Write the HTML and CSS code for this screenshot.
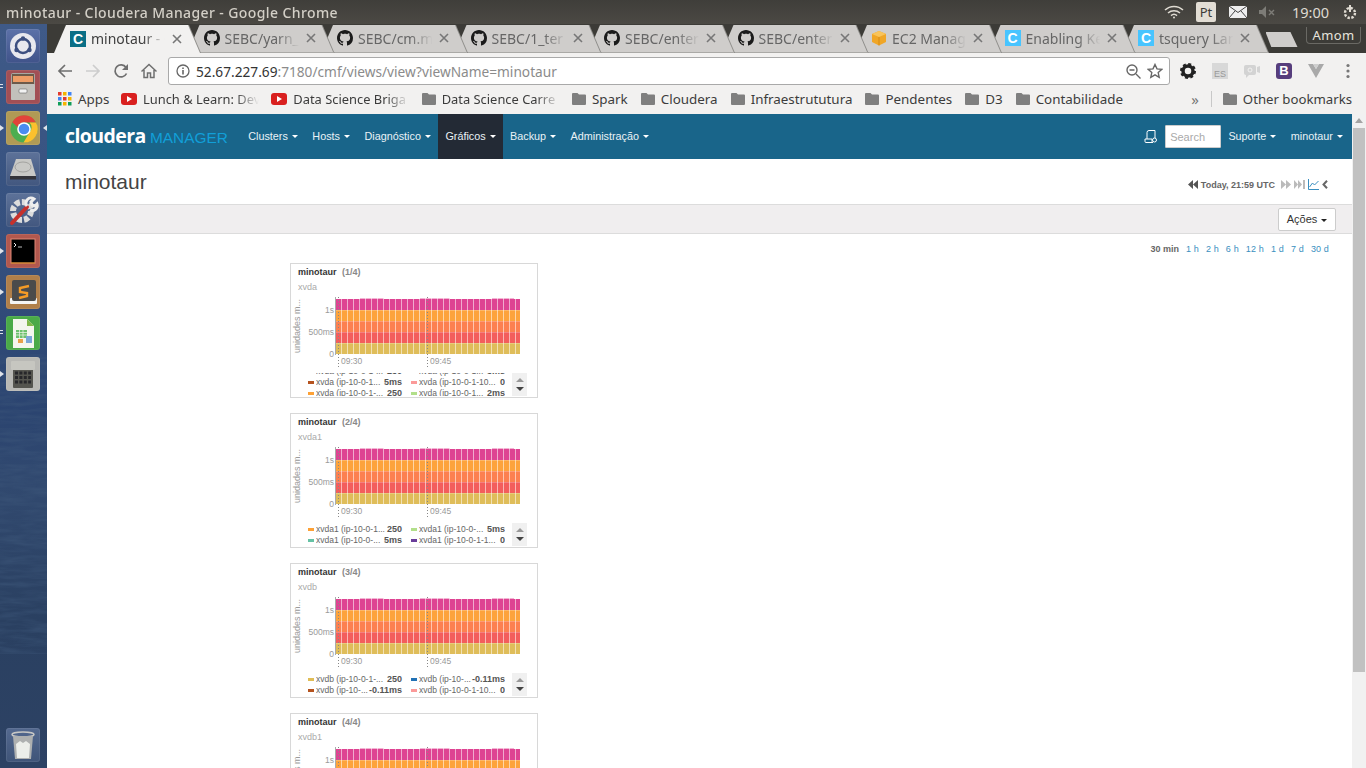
FILE: index.html
```html
<!DOCTYPE html>
<html lang="en">
<head>
  <meta charset="UTF-8">
  <title>minotaur - Cloudera Manager</title>
  <link rel="stylesheet" href="styles.css">
</head>
<body>
  <!-- shared shapes -->
  <svg class="defs">
    <defs>
      <pattern id="cols" width="6" height="60" patternUnits="userSpaceOnUse">
        <rect x="5" width="1" height="60" fill="#fff" opacity=".55"/>
      </pattern>
      <filter id="waves" x="0" y="0" width="100%" height="100%">
        <feTurbulence type="fractalNoise" baseFrequency=".035 .22" numOctaves="3" seed="7"/>
        <feColorMatrix values="0 0 0 0 .05  0 0 0 0 .1  0 0 0 0 .2  1.600 0 0 0 -.55"/>
      </filter>
      <symbol id="bars" viewBox="0 0 184 56">
        <rect y="1" width="184" height="11" fill="#de4392"/>
        <rect y="12" width="184" height="11" fill="#fda33c"/>
        <rect y="23" width="184" height="11" fill="#fc8050"/>
        <rect y="34" width="184" height="11" fill="#f35d5c"/>
        <rect y="45" width="184" height="11" fill="#dfbd5a"/>
        <rect x="24" width="24" height="1" fill="#de4392" opacity=".4"/>
        <rect x="84" width="30" height="1" fill="#de4392" opacity=".4"/>
        <rect x="156" width="22" height="1" fill="#de4392" opacity=".4"/>
        <path stroke="#fff" stroke-opacity=".22" d="M0 12.500h184M0 23.500h184M0 34.500h184M0 45.500h184"/>
        <rect width="184" height="56" fill="url(#cols)"/>
      </symbol>
      <symbol id="gh" viewBox="0 0 16 16">
        <path fill="#1b1b1b" d="M8 0C3.58 0 0 3.58 0 8c0 3.54 2.29 6.53 5.47 7.59.4.07.55-.17.55-.38 0-.19-.01-.82-.01-1.49-2.01.37-2.53-.49-2.69-.94-.09-.23-.48-.94-.82-1.13-.28-.15-.68-.52-.01-.53.63-.01 1.08.58 1.23.82.72 1.21 1.87.87 2.33.66.07-.52.28-.87.51-1.07-1.78-.2-3.64-.89-3.64-3.95 0-.87.31-1.59.82-2.15-.08-.2-.36-1.02.08-2.12 0 0 .67-.21 2.2.82.64-.18 1.32-.27 2-.27.68 0 1.36.09 2 .27 1.53-1.04 2.2-.82 2.2-.82.44 1.1.16 1.92.08 2.12.51.56.82 1.27.82 2.15 0 3.07-1.87 3.75-3.65 3.95.29.25.54.73.54 1.48 0 1.07-.01 1.93-.01 2.2 0 .21.15.46.55.38A8.013 8.013 0 0016 8c0-4.42-3.58-8-8-8z"/>
      </symbol>
      <symbol id="folder" viewBox="0 0 14 12">
        <path fill="#7f7f7f" d="M1 0h4.500l1.500 1.600h6a1 1 0 0 1 1 1V11a1 1 0 0 1-1 1H1a1 1 0 0 1-1-1V1a1 1 0 0 1 1-1z"/>
      </symbol>
      <symbol id="yt" viewBox="0 0 16 12">
        <rect width="16" height="12" rx="3" fill="#d9201f"/>
        <path fill="#fff" d="M6 3l5 3-5 3z"/>
      </symbol>
      <symbol id="x" viewBox="0 0 10 10">
        <path stroke="#777" stroke-width="1.600" d="M1 1l8 8M9 1l-8 8"/>
      </symbol>
    </defs>
  </svg>

  <header class="panel">
    <div class="panel-title">minotaur - Cloudera Manager - Google Chrome</div>
    <div class="indicators">
      <svg class="ind-wifi" width="20" height="14" viewBox="0 0 20 14" fill="none" stroke="#dfdbd2" stroke-width="1.500">
        <path d="M1 5a13 13 0 0 1 18 0M4 8a9 9 0 0 1 12 0M7 10.600a4.500 4.500 0 0 1 6 0"/>
        <circle cx="10" cy="12.500" r="1" fill="#dfdbd2" stroke="none"/>
      </svg>
      <span class="ind-lang">Pt</span>
      <svg class="ind-mail" width="18" height="12" viewBox="0 0 18 12">
        <rect width="18" height="12" rx="1" fill="#eee"/>
        <path fill="none" stroke="#444" d="M0 0l9 6.500L18 0M0 12l6-7M18 12l-6-7"/>
      </svg>
      <svg class="ind-mute" width="18" height="12" viewBox="0 0 18 12">
        <path fill="#7d7c77" d="M0 4h3l4-4v12l-4-4H0z"/>
        <path stroke="#7d7c77" stroke-width="1.400" d="M10 4l5 5M15 4l-5 5"/>
      </svg>
      <span class="ind-clock">19:00</span>
      <svg class="ind-power" width="16" height="16" viewBox="0 0 16 16">
        <circle cx="8" cy="9" r="5" fill="none" stroke="#dfdbd2" stroke-width="2.400" stroke-dasharray="2.400 1.500"/>
        <path stroke="#dfdbd2" stroke-width="2" d="M8 1v7"/>
      </svg>
    </div>
  </header>

  <div class="desktop">
    <nav class="dock">
      <svg class="dock-waves" width="47" height="744"><rect y="330" width="47" height="300" filter="url(#waves)"/></svg>
      <div class="dock-group">
        <div class="tile tile-ubuntu">
          <svg width="34" height="34" viewBox="0 0 34 34">
            <circle cx="17" cy="17" r="13" fill="#e8e8ee"/>
            <circle cx="17" cy="17" r="7" fill="none" stroke="#3d4f80" stroke-width="2.500"/>
            <circle cx="17" cy="9.500" r="2.200" fill="#3d4f80"/>
            <circle cx="10.500" cy="21" r="2.200" fill="#3d4f80"/>
            <circle cx="23.500" cy="21" r="2.200" fill="#3d4f80"/>
          </svg>
        </div>
        <div class="tile tile-files">
          <svg width="34" height="34" viewBox="0 0 34 34">
            <rect x="5" y="3" width="24" height="27" rx="2" fill="#a9a7a2"/>
            <rect x="6" y="4" width="22" height="10" fill="#6d5a4a"/>
            <rect x="7" y="6" width="20" height="6" fill="#ee9c66"/>
            <rect x="5" y="14" width="24" height="16" rx="1" fill="#c2c0bb"/>
            <rect x="13" y="19" width="8" height="4" rx="1" fill="#f2f2f2" stroke="#666" stroke-width=".6"/>
          </svg>
          <i class="pip pip-dots"></i>
        </div>
        <div class="tile tile-chrome">
          <svg width="34" height="34" viewBox="0 0 34 34">
            <circle cx="18" cy="18" r="13.500" fill="#4cae50"/>
            <path fill="#e2443a" d="M6.300 11.200A13.500 13.500 0 0 1 30 11.500H18a7 7 0 0 0-6.500 4.500z"/>
            <path fill="#fbc02d" d="M30 11.500a13.500 13.500 0 0 1-12.500 20l6-10a7 7 0 0 0 0-10z"/>
            <circle cx="18" cy="18" r="6.800" fill="#fff"/>
            <circle cx="18" cy="18" r="5.300" fill="#4a8cf0"/>
          </svg>
          <i class="pip pip-left"></i>
          <i class="pip pip-right"></i>
        </div>
        <div class="tile tile-glass">
          <svg width="34" height="34" viewBox="0 0 34 34">
            <path fill="#c9c9c6" d="M10 7h15l5 17H4z"/>
            <path fill="#34343a" d="M4 24h26v3.500H4z"/>
            <ellipse cx="17" cy="15" rx="8" ry="5" fill="none" stroke="#a3a3a0"/>
          </svg>
        </div>
        <div class="tile tile-glass">
          <svg width="34" height="34" viewBox="0 0 34 34">
            <circle cx="16" cy="18" r="9" fill="none" stroke="#dcdcdc" stroke-width="6" stroke-dasharray="5 2"/>
            <path stroke="#c7312c" stroke-width="4" stroke-linecap="round" d="M6 30L21 14"/>
            <path fill="none" stroke="#eee" stroke-width="3" d="M21 13a5 5 0 0 1 7-7l-3 3 1 3 3 1 2-2a5 5 0 0 1-7 6"/>
          </svg>
        </div>
        <div class="tile tile-term">
          <svg width="34" height="34" viewBox="0 0 34 34">
            <rect x="5" y="5" width="24" height="24" fill="#000" stroke="#d87" stroke-width="1"/>
            <path stroke="#d38a1a" d="M5 29h24"/>
            <path fill="none" stroke="#eee" d="M8 9l2 2-2 2"/>
            <path stroke="#bbb" d="M12 13h4"/>
          </svg>
          <i class="pip pip-left"></i>
        </div>
        <div class="tile tile-sublime">
          <svg width="34" height="34" viewBox="0 0 34 34">
            <rect x="4" y="23" width="27" height="6" rx="1" fill="#f4f4f4"/>
            <rect x="6" y="5" width="24" height="21" rx="2" fill="#4b4b4b"/>
            <path fill="none" stroke="#f59b26" stroke-width="2.400" d="M23 11l-9 2v4l7 1v3l-8 2"/>
          </svg>
          <i class="pip pip-left"></i>
        </div>
        <div class="tile tile-calc">
          <svg width="34" height="34" viewBox="0 0 34 34">
            <path fill="#f4f6ee" d="M7 3h14l7 7v22H7z"/>
            <path fill="#80b84a" d="M21 3l7 7h-7z"/>
            <rect x="10" y="14" width="11" height="8" fill="#6cc16c"/>
            <path stroke="#f4f6ee" stroke-width=".7" d="M10 16.500h11M10 19h11M13.500 14v8M17 14v8"/>
            <rect x="20" y="20" width="6" height="7" fill="#7aa6d8"/>
            <rect x="12" y="23" width="5" height="4" fill="#e8a14a"/>
          </svg>
          <i class="pip pip-dots"></i>
        </div>
        <div class="tile tile-calculator">
          <svg width="34" height="34" viewBox="0 0 34 34">
            <rect x="7" y="4" width="20" height="27" rx="1" fill="#55554f"/>
            <rect x="5" y="4" width="24" height="9" rx="1" fill="#c6c6c0"/>
            <path stroke="#27272a" stroke-width="3" stroke-dasharray="3 1.400" d="M9 16h16M9 20.500h16M9 25h16"/>
          </svg>
          <i class="pip pip-left"></i>
        </div>
      </div>
      <div class="tile tile-trash">
        <svg width="34" height="34" viewBox="0 0 34 34">
          <ellipse cx="17" cy="6.500" rx="11" ry="2.500" fill="none" stroke="#c7c7c5" stroke-width="1.500"/>
          <path fill="#aeb0b0" d="M7 8h20l-2 23H9z"/>
          <path fill="#eceeea" d="M10 16l4-3 3 2 3-2 4 3-1 14H11z"/>
        </svg>
      </div>
    </nav>

    <div class="browser">
      <div class="tabstrip">
        <div class="tab tab-active"><div class="tab-shape">
          <span class="fav fav-cloudera">C</span>
          <span class="tab-title">minotaur - C</span>
          <svg class="tab-x" width="10" height="10"><use href="#x"/></svg>
        </div></div>
        <div class="tab"><div class="tab-shape">
          <svg class="fav" width="16" height="16"><use href="#gh"/></svg>
          <span class="tab-title">SEBC/yarn_</span>
          <svg class="tab-x" width="10" height="10"><use href="#x"/></svg>
        </div></div>
        <div class="tab"><div class="tab-shape">
          <svg class="fav" width="16" height="16"><use href="#gh"/></svg>
          <span class="tab-title">SEBC/cm.m</span>
          <svg class="tab-x" width="10" height="10"><use href="#x"/></svg>
        </div></div>
        <div class="tab"><div class="tab-shape">
          <svg class="fav" width="16" height="16"><use href="#gh"/></svg>
          <span class="tab-title">SEBC/1_ter</span>
          <svg class="tab-x" width="10" height="10"><use href="#x"/></svg>
        </div></div>
        <div class="tab"><div class="tab-shape">
          <svg class="fav" width="16" height="16"><use href="#gh"/></svg>
          <span class="tab-title">SEBC/enter</span>
          <svg class="tab-x" width="10" height="10"><use href="#x"/></svg>
        </div></div>
        <div class="tab"><div class="tab-shape">
          <svg class="fav" width="16" height="16"><use href="#gh"/></svg>
          <span class="tab-title">SEBC/enter</span>
          <svg class="tab-x" width="10" height="10"><use href="#x"/></svg>
        </div></div>
        <div class="tab"><div class="tab-shape">
          <svg class="fav" width="16" height="16" viewBox="0 0 16 16">
            <path fill="#f0a626" d="M8 1l7 3v8l-7 3.500L1 12V4z"/>
            <path fill="#f9c45a" d="M8 1l7 3-7 3-7-3z"/>
            <path stroke="#c97f10" stroke-width=".7" d="M8 7v8.500"/>
          </svg>
          <span class="tab-title">EC2 Manag</span>
          <svg class="tab-x" width="10" height="10"><use href="#x"/></svg>
        </div></div>
        <div class="tab"><div class="tab-shape">
          <span class="fav fav-confluence">C</span>
          <span class="tab-title">Enabling Ke</span>
          <svg class="tab-x" width="10" height="10"><use href="#x"/></svg>
        </div></div>
        <div class="tab"><div class="tab-shape">
          <span class="fav fav-confluence">C</span>
          <span class="tab-title">tsquery Lan</span>
          <svg class="tab-x" width="10" height="10"><use href="#x"/></svg>
        </div></div>
        <div class="newtab"></div>
        <div class="profile">Amom</div>
      </div>

      <div class="toolbar">
        <svg class="tb-icon" width="16" height="16" viewBox="0 0 16 16" fill="none" stroke="#6f6f6f" stroke-width="1.700">
          <path d="M15 8H2M8 2L2 8l6 6"/>
        </svg>
        <svg class="tb-icon" width="16" height="16" viewBox="0 0 16 16" fill="none" stroke="#cdcdcd" stroke-width="1.700">
          <path d="M1 8h13M8 2l6 6-6 6"/>
        </svg>
        <svg class="tb-icon" width="16" height="16" viewBox="0 0 16 16" fill="none" stroke="#6f6f6f" stroke-width="1.700">
          <path d="M13.500 10.500A6 6 0 1 1 13 4.500"/>
          <path fill="#6f6f6f" stroke="none" d="M15 1v6H9z"/>
        </svg>
        <svg class="tb-icon" width="16" height="16" viewBox="0 0 16 16" fill="none" stroke="#6f6f6f" stroke-width="1.500">
          <path d="M.5 8.500L8 1.500l7.500 7M3 7v7.500h3.500V10h3v4.500H13V7"/>
        </svg>
        <div class="omnibox">
          <svg width="14" height="14" viewBox="0 0 14 14" fill="none" stroke="#666" stroke-width="1.300">
            <circle cx="7" cy="7" r="6"/><path stroke-width="1.600" d="M7 6v4.500M7 3.400v1.500"/>
          </svg>
          <span class="url"><b>52.67.227.69</b>:7180/cmf/views/view?viewName=minotaur</span>
          <svg width="15" height="15" viewBox="0 0 15 15" fill="none" stroke="#666" stroke-width="1.400">
            <circle cx="6" cy="6" r="5"/><path d="M3.500 6h5M10 10l4.500 4.500"/>
          </svg>
          <svg width="16" height="16" viewBox="0 0 16 16" fill="none" stroke="#666" stroke-width="1.400">
            <path d="M8 1.500l2 4.400 4.700.5-3.500 3.200 1 4.700L8 11.900l-4.200 2.400 1-4.700L1.300 6.400 6 5.900z"/>
          </svg>
        </div>
        <div class="extensions">
          <svg width="16" height="16" viewBox="0 0 16 16">
            <circle cx="8" cy="8" r="5" fill="none" stroke="#222" stroke-width="3.500"/>
            <circle cx="8" cy="8" r="7" fill="none" stroke="#222" stroke-width="2" stroke-dasharray="3 2.500"/>
          </svg>
          <span class="ext-es">ES</span>
          <svg width="16" height="14" viewBox="0 0 16 14">
            <rect width="12" height="10" y="1" rx="2" fill="#d3d3d3"/>
            <path fill="#d3d3d3" d="M2 10v4l4-4zM13 3l3-1v7l-3-1z"/>
            <circle cx="6" cy="6" r="2" fill="none" stroke="#f2f1f0"/>
          </svg>
          <span class="ext-b">B</span>
          <svg width="16" height="14" viewBox="0 0 16 14">
            <path fill="#a9a9a9" d="M0 0h5l3 5 3-5h5L8 14z"/>
            <path fill="#cfcfcf" d="M5 0h6L8 5z"/>
          </svg>
          <svg class="ext-menu" width="4" height="16" viewBox="0 0 4 16">
            <circle cx="2" cy="2.500" r="1.600" fill="#777"/><circle cx="2" cy="8" r="1.600" fill="#777"/><circle cx="2" cy="13.500" r="1.600" fill="#777"/>
          </svg>
        </div>
      </div>

      <div class="bookmarks">
        <div class="bm bm-apps">
          <svg width="14" height="14" viewBox="0 0 14 14">
            <rect width="3.500" height="3.500" fill="#e33b2e"/><rect x="5" width="3.500" height="3.500" fill="#f4b400"/><rect x="10" width="3.500" height="3.500" fill="#4285f4"/>
            <rect y="5" width="3.500" height="3.500" fill="#4285f4"/><rect x="5" y="5" width="3.500" height="3.500" fill="#e33b2e"/><rect x="10" y="5" width="3.500" height="3.500" fill="#f4b400"/>
            <rect y="10" width="3.500" height="3.500" fill="#0f9d58"/><rect x="5" y="10" width="3.500" height="3.500" fill="#f4b400"/><rect x="10" y="10" width="3.500" height="3.500" fill="#0f9d58"/>
          </svg>
          <span>Apps</span>
        </div>
        <div class="bm bm-long"><svg width="16" height="12"><use href="#yt"/></svg><span class="bm-fade">Lunch &amp; Learn: Dev</span></div>
        <div class="bm bm-long"><svg width="16" height="12"><use href="#yt"/></svg><span class="bm-fade">Data Science Briga</span></div>
        <div class="bm bm-long"><svg width="14" height="12"><use href="#folder"/></svg><span class="bm-fade">Data Science Carre</span></div>
        <div class="bm"><svg width="14" height="12"><use href="#folder"/></svg><span>Spark</span></div>
        <div class="bm"><svg width="14" height="12"><use href="#folder"/></svg><span>Cloudera</span></div>
        <div class="bm"><svg width="14" height="12"><use href="#folder"/></svg><span>Infraestrututura</span></div>
        <div class="bm"><svg width="14" height="12"><use href="#folder"/></svg><span>Pendentes</span></div>
        <div class="bm"><svg width="14" height="12"><use href="#folder"/></svg><span>D3</span></div>
        <div class="bm"><svg width="14" height="12"><use href="#folder"/></svg><span>Contabilidade</span></div>
        <div class="bm-right">
          <span class="bm-more">»</span>
          <i class="bm-sep"></i>
          <div class="bm"><svg width="14" height="12"><use href="#folder"/></svg><span>Other bookmarks</span></div>
        </div>
      </div>

      <div class="viewport">
        <main class="page">
          <div class="cm-nav">
            <div class="logo"><span class="logo-a">cloudera</span> <span class="logo-b">MANAGER</span></div>
            <a class="nav-item">Clusters<i class="caret"></i></a>
            <a class="nav-item">Hosts<i class="caret"></i></a>
            <a class="nav-item">Diagnóstico<i class="caret"></i></a>
            <a class="nav-item nav-active">Gráficos<i class="caret"></i></a>
            <a class="nav-item">Backup<i class="caret"></i></a>
            <a class="nav-item">Administração<i class="caret"></i></a>
            <div class="nav-right">
              <svg width="13" height="13" viewBox="0 0 13 13" fill="none" stroke="#fff">
                <path d="M3 9V2.500a2 2 0 0 1 2-2h6v8M1 9h7v2.500a1 1 0 0 0 1 1H2a1 1 0 0 1-1-1z"/>
                <circle cx="10.500" cy="10" r="2" fill="#19658a"/>
              </svg>
              <input class="nav-search" placeholder="Search">
              <a class="nav-item">Suporte<i class="caret"></i></a>
              <a class="nav-item nav-user">minotaur<i class="caret"></i></a>
            </div>
          </div>

          <div class="title-row">
            <h1>minotaur</h1>
            <div class="timecontrol">
              <svg width="10" height="9" viewBox="0 0 10 9"><path fill="#555" d="M5 0v9L0 4.500zM10 0v9L5 4.500z"/></svg>
              <span>Today, 21:59 UTC</span>
              <svg width="10" height="9" viewBox="0 0 10 9"><path fill="#bbb" d="M0 0v9l5-4.500zM5 0v9l5-4.500z"/></svg>
              <svg width="11" height="9" viewBox="0 0 11 9"><path fill="#bbb" d="M0 0v9l4-4.500zM4 0v9l4-4.500zM9 0h2v9H9z"/></svg>
              <svg width="11" height="11" viewBox="0 0 11 11" fill="none" stroke="#3a8fc0"><path d="M.5 0v10.500H11M1.500 8l3-4 2 2 4-4"/></svg>
              <svg width="6" height="9" viewBox="0 0 6 9" fill="none" stroke="#666" stroke-width="2"><path d="M5 .7L1.500 4.500 5 8.300"/></svg>
            </div>
          </div>

          <div class="actions-row">
            <button class="actions-btn">Ações<i class="caret caret-dark"></i></button>
          </div>

          <div class="range-row">
            <span class="range-on">30 min</span>
            <a>1 h</a><a>2 h</a><a>6 h</a><a>12 h</a><a>1 d</a><a>7 d</a><a>30 d</a>
          </div>

          <section class="charts">
            <article class="card">
              <div class="card-title">minotaur <span>(1/4)</span></div>
              <div class="card-sub">xvda</div>
              <svg class="plot" width="246" height="75" viewBox="0 0 246 75">
                <text class="axis axis-name" transform="translate(9 33) rotate(-90)" text-anchor="middle">unidades m...</text>
                <use href="#bars" x="45" y="5" width="184" height="56"/>
                <path class="axis-y" d="M44.500 4v58"/>
                <path class="axis-grid" d="M47.500 4v71M136.500 4v71"/>
                <text class="axis" x="43" y="20" text-anchor="end">1s</text>
                <text class="axis" x="43" y="42" text-anchor="end">500ms</text>
                <text class="axis" x="43" y="64" text-anchor="end">0</text>
                <text class="axis" x="50" y="71">09:30</text>
                <text class="axis" x="139" y="71">09:45</text>
              </svg>
              <div class="legend-bar">
                <div class="legend-clip">
                  <div class="legend legend-scrolled">
                    <div class="lg"><i class="sw c-yellow"></i><span>xvda (ip-10-0-1-...</span><b>250</b></div>
                    <div class="lg"><i class="sw c-blue"></i><span>xvda (ip-10-0-1...</span><b>5ms</b></div>
                    <div class="lg"><i class="sw c-brown"></i><span>xvda (ip-10-0-1...</span><b>5ms</b></div>
                    <div class="lg"><i class="sw c-pink"></i><span>xvda (ip-10-0-1-10...</span><b>0</b></div>
                    <div class="lg"><i class="sw c-orange"></i><span>xvda (ip-10-0-1-...</span><b>250</b></div>
                    <div class="lg"><i class="sw c-green"></i><span>xvda (ip-10-0-1...</span><b>2ms</b></div>
                  </div>
                </div>
                <div class="legend-arrows"><i class="up"></i><i class="down"></i></div>
              </div>
            </article>

            <article class="card">
              <div class="card-title">minotaur <span>(2/4)</span></div>
              <div class="card-sub">xvda1</div>
              <svg class="plot" width="246" height="75" viewBox="0 0 246 75">
                <text class="axis axis-name" transform="translate(9 33) rotate(-90)" text-anchor="middle">unidades m...</text>
                <use href="#bars" x="45" y="5" width="184" height="56"/>
                <path class="axis-y" d="M44.500 4v58"/>
                <path class="axis-grid" d="M47.500 4v71M136.500 4v71"/>
                <text class="axis" x="43" y="20" text-anchor="end">1s</text>
                <text class="axis" x="43" y="42" text-anchor="end">500ms</text>
                <text class="axis" x="43" y="64" text-anchor="end">0</text>
                <text class="axis" x="50" y="71">09:30</text>
                <text class="axis" x="139" y="71">09:45</text>
              </svg>
              <div class="legend-bar">
                <div class="legend-clip">
                  <div class="legend">
                    <div class="lg"><i class="sw c-orange"></i><span>xvda1 (ip-10-0-1...</span><b>250</b></div>
                    <div class="lg"><i class="sw c-green"></i><span>xvda1 (ip-10-0-...</span><b>5ms</b></div>
                    <div class="lg"><i class="sw c-teal"></i><span>xvda1 (ip-10-0-...</span><b>5ms</b></div>
                    <div class="lg"><i class="sw c-purple"></i><span>xvda1 (ip-10-0-1-1...</span><b>0</b></div>
                  </div>
                </div>
                <div class="legend-arrows"><i class="up"></i><i class="down"></i></div>
              </div>
            </article>

            <article class="card">
              <div class="card-title">minotaur <span>(3/4)</span></div>
              <div class="card-sub">xvdb</div>
              <svg class="plot" width="246" height="75" viewBox="0 0 246 75">
                <text class="axis axis-name" transform="translate(9 33) rotate(-90)" text-anchor="middle">unidades m...</text>
                <use href="#bars" x="45" y="5" width="184" height="56"/>
                <path class="axis-y" d="M44.500 4v58"/>
                <path class="axis-grid" d="M47.500 4v71M136.500 4v71"/>
                <text class="axis" x="43" y="20" text-anchor="end">1s</text>
                <text class="axis" x="43" y="42" text-anchor="end">500ms</text>
                <text class="axis" x="43" y="64" text-anchor="end">0</text>
                <text class="axis" x="50" y="71">09:30</text>
                <text class="axis" x="139" y="71">09:45</text>
              </svg>
              <div class="legend-bar">
                <div class="legend-clip">
                  <div class="legend">
                    <div class="lg"><i class="sw c-yellow"></i><span>xvdb (ip-10-0-1-...</span><b>250</b></div>
                    <div class="lg"><i class="sw c-blue"></i><span>xvdb (ip-10-...</span><b>-0.11ms</b></div>
                    <div class="lg"><i class="sw c-brown"></i><span>xvdb (ip-10-...</span><b>-0.11ms</b></div>
                    <div class="lg"><i class="sw c-pink"></i><span>xvdb (ip-10-0-1-10...</span><b>0</b></div>
                  </div>
                </div>
                <div class="legend-arrows"><i class="up"></i><i class="down"></i></div>
              </div>
            </article>

            <article class="card">
              <div class="card-title">minotaur <span>(4/4)</span></div>
              <div class="card-sub">xvdb1</div>
              <svg class="plot" width="246" height="75" viewBox="0 0 246 75">
                <text class="axis axis-name" transform="translate(9 33) rotate(-90)" text-anchor="middle">unidades m...</text>
                <use href="#bars" x="45" y="5" width="184" height="56"/>
                <path class="axis-y" d="M44.500 4v58"/>
                <path class="axis-grid" d="M47.500 4v71M136.500 4v71"/>
                <text class="axis" x="43" y="20" text-anchor="end">1s</text>
              </svg>
            </article>
          </section>
        </main>
        <div class="scrollbar">
          <i class="sb-up"></i>
          <div class="sb-thumb"></div>
        </div>
      </div>
    </div>
  </div>
</body>
</html>
```

FILE: styles.css
```css
* {
  box-sizing: border-box;
}

html, body {
  height: 100%;
}

body {
  margin: 0;
  overflow: hidden;
  display: flex;
  flex-direction: column;
  background: #3c3b37;
  font-family: "Liberation Sans", sans-serif;
}

.defs {
  display: block;
  width: 0;
  height: 0;
}

/* ubuntu top panel */
.panel {
  height: 24px;
  flex: none;
  display: flex;
  align-items: center;
  justify-content: space-between;
  padding-left: 6px;
  background: linear-gradient(#3f3e3a, #4b4944);
  color: #dfdbd2;
}

.panel-title {
  font: 500 14px "Noto Sans", sans-serif;
  letter-spacing: .4px;
  opacity: .92;
}

.indicators {
  display: flex;
  align-items: center;
  padding-right: 8px;
}

.ind-lang {
  width: 20px;
  height: 20px;
  margin-left: 12px;
  border-radius: 2px;
  background: #e2ddd4;
  color: #3c3b37;
  font: 13px/20px "Noto Sans", sans-serif;
  text-align: center;
}

.ind-mail {
  margin-left: 13px;
}

.ind-mute {
  margin-left: 12px;
}

.ind-clock {
  margin-left: 15px;
  font: 14.500px "Noto Sans", sans-serif;
}

.ind-power {
  margin-left: 13px;
}

.desktop {
  flex: 1;
  min-height: 0;
  display: flex;
}

/* launcher */
.dock {
  position: relative;
  width: 47px;
  flex: none;
  display: flex;
  flex-direction: column;
  justify-content: space-between;
  padding: 5px 0 6px 6px;
  background: linear-gradient(#3f5a88 0, #35507e 30%, #2b4470 52%, #31496f 62%, #2a4061 80%, #2d4264 100%);
}

.dock-waves {
  position: absolute;
  top: 0;
  left: 0;
  opacity: .6;
}

.dock-group {
  position: relative;
  display: flex;
  flex-direction: column;
  gap: 7px;
}

.tile {
  position: relative;
  width: 34px;
  height: 34px;
  border-radius: 3px;
  box-shadow: inset 0 0 0 1px rgba(255, 255, 255, .08);
}

.tile svg {
  display: block;
}

.tile-ubuntu { background: linear-gradient(#5c71a8, #40538a); }
.tile-files { background: #a24f55; }
.tile-chrome { background: #b09a55; }
.tile-glass { background: linear-gradient(#5d7299, #42577f); }
.tile-term { background: #b2584e; }
.tile-sublime { background: #b07f4a; }
.tile-calc { background: #4aaa48; }
.tile-calculator { background: #b9b9b5; }
.tile-trash { background: linear-gradient(#54698f, #3f5478); }

.pip {
  position: absolute;
  top: 14px;
  width: 0;
  height: 0;
  border-style: solid;
  border-color: transparent;
}

.pip-left {
  left: -6px;
  border-width: 3px 0 3px 4px;
  border-left-color: #dfe3ea;
}

.pip-right {
  right: -7px;
  border-width: 3px 4px 3px 0;
  border-right-color: #dfe3ea;
}

.pip-dots {
  left: -6px;
  width: 3px;
  height: 5px;
  border: 0;
  background: repeating-linear-gradient(#dfe3ea 0 1.500px, transparent 1.500px 3px);
}

/* chrome */
.browser {
  flex: 1;
  min-width: 0;
  display: flex;
  flex-direction: column;
}

.tabstrip {
  position: relative;
  height: 29px;
  flex: none;
  display: flex;
  align-items: flex-end;
  padding-left: 7px;
}

.tab {
  width: 146px;
  height: 28px;
  flex: none;
  margin-right: -12.500px;
  filter: drop-shadow(1px 0 0 #8e8d8a);
}

.tab:nth-child(1) { z-index: 9; }
.tab:nth-child(2) { z-index: 8; }
.tab:nth-child(3) { z-index: 7; }
.tab:nth-child(4) { z-index: 6; }
.tab:nth-child(5) { z-index: 5; }
.tab:nth-child(6) { z-index: 4; }
.tab:nth-child(7) { z-index: 3; }
.tab:nth-child(8) { z-index: 2; }
.tab:nth-child(9) { z-index: 1; }

.tab-shape {
  height: 100%;
  display: flex;
  align-items: center;
  padding: 0 18px 1px 16px;
  clip-path: polygon(0 100%, 12px 0, calc(100% - 12px) 0, 100% 100%);
  background: #cfcdcb;
  border-bottom: 1px solid #aaa9a6;
  color: #666;
  font: 14px "Noto Sans", sans-serif;
}

.tab-active .tab-shape {
  background: #f2f1f0;
  border-bottom: 0;
  color: #3f3f3f;
}

.fav {
  width: 16px;
  height: 16px;
  flex: none;
  display: block;
}

.fav-cloudera,
.fav-confluence {
  color: #fff;
  font: bold 14px/16px "Liberation Sans", sans-serif;
  text-align: center;
}

.fav-cloudera { background: #0b6f86; }
.fav-confluence { background: #47c4ff; }

.tab-title {
  flex: 1;
  min-width: 0;
  margin: 0 1px 0 5px;
  overflow: hidden;
  white-space: nowrap;
  -webkit-mask-image: linear-gradient(to right, #000 65%, transparent 93%);
  mask-image: linear-gradient(to right, #000 65%, transparent 93%);
}

.tab-x {
  flex: none;
}

.newtab {
  width: 32px;
  height: 15px;
  margin: 0 0 6px 10px;
  flex: none;
  z-index: 0;
  clip-path: polygon(0 0, 78% 0, 100% 100%, 18% 100%);
  background: #cfcdcb;
}

.profile {
  position: absolute;
  top: 3px;
  right: 5px;
  width: 55px;
  height: 17px;
  border: 1px solid #6a6964;
  border-top: 0;
  border-radius: 0 0 4px 4px;
  color: #e6e3dc;
  font: 13px/16px "Noto Sans", sans-serif;
  letter-spacing: .4px;
  text-align: center;
}

.toolbar {
  height: 33px;
  flex: none;
  display: flex;
  align-items: center;
  padding: 3px 0 0 10px;
  background: #f2f1f0;
}

.tb-icon {
  flex: none;
  margin-right: 12px;
}

.omnibox {
  width: 1002px;
  height: 28px;
  flex: none;
  margin-left: -1px;
  display: flex;
  align-items: center;
  gap: 6px;
  padding: 0 6px 0 7px;
  background: #fff;
  border: 1px solid #a9a9a9;
  border-radius: 3px;
}

.url {
  flex: 1;
  color: #8b8b8b;
  font: 13.700px "Noto Sans", sans-serif;
}

.url b {
  color: #333;
  font-weight: 400;
}

.extensions {
  flex: 1;
  display: flex;
  align-items: center;
  gap: 16px;
  padding-left: 10px;
}

.ext-es {
  width: 16px;
  height: 16px;
  background: #d8d8d8;
  color: #999;
  font: 9px/22px "Liberation Sans", sans-serif;
  text-align: center;
  overflow: hidden;
}

.ext-b {
  width: 16px;
  height: 16px;
  border-radius: 3px;
  background: #563d7c;
  color: #fff;
  font: bold 13px/16px "Liberation Sans", sans-serif;
  text-align: center;
}

.ext-menu {
  margin-left: 6px;
}

.bookmarks {
  height: 28px;
  flex: none;
  display: flex;
  align-items: center;
  padding: 0 14px 2px 11px;
  background: #f2f1f0;
  font: 13.400px "Noto Sans", sans-serif;
  color: #3c3c3c;
}

.bm {
  display: flex;
  align-items: center;
  gap: 6px;
  margin-right: 13px;
  white-space: nowrap;
}

.bm-apps {
  width: 52px;
  margin-right: 11px;
}

.bm-long {
  width: 138px;
  margin-right: 12.330px;
  font-size: 12.900px;
}

.bm-fade {
  flex: 1;
  min-width: 0;
  overflow: hidden;
  -webkit-mask-image: linear-gradient(to right, #000 80%, transparent);
  mask-image: linear-gradient(to right, #000 80%, transparent);
}

.bm-right {
  margin-left: auto;
  display: flex;
  align-items: center;
  font-size: 13.200px;
}

.bm-right .bm {
  margin-right: 0;
}

.bm-more {
  color: #777;
  font-size: 15px;
  margin-right: 12px;
}

.bm-sep {
  width: 1px;
  height: 16px;
  margin-right: 11px;
  background: #c8c8c8;
}

.viewport {
  flex: 1;
  min-height: 0;
  display: flex;
}

/* cloudera manager page */
.page {
  flex: 1;
  min-width: 0;
  overflow: hidden;
  background: #fff;
}

.scrollbar {
  width: 14px;
  flex: none;
  background: #f1f1f1;
  padding: 4px 1px 0;
}

.sb-up {
  display: block;
  width: 0;
  height: 0;
  margin: 0 auto 5px;
  border: 4px solid transparent;
  border-top: 0;
  border-bottom: 5px solid #a3a3a3;
}

.sb-thumb {
  height: 544px;
  background: #c1c1c1;
}

.cm-nav {
  height: 45px;
  display: flex;
  align-items: center;
  padding-left: 18px;
  background: #19658a;
  color: #fff;
}

.logo {
  width: 176px;
  margin: 0 0 3px;
  white-space: nowrap;
}

.logo-a {
  font: bold 19.500px "Open Sans", sans-serif;
  letter-spacing: -.6px;
}

.logo-b {
  color: #119fd8;
  font: 15.400px "Liberation Sans", sans-serif;
}

.nav-item {
  height: 100%;
  display: flex;
  align-items: center;
  padding: 0 7.250px 1px;
  color: #eaf2f6;
  font-size: 10.800px;
}

.nav-active {
  background: #232a35;
}

.caret {
  width: 0;
  height: 0;
  margin-left: 4px;
  border-style: solid;
  border-width: 3px 3.500px 0;
  border-color: #fff transparent transparent;
}

.caret-dark {
  border-top-color: #222;
}

.nav-right {
  margin-left: auto;
  height: 100%;
  display: flex;
  align-items: center;
  padding-right: 2px;
}

.nav-search {
  width: 56px;
  height: 23px;
  margin: 0 0 0 8px;
  padding: 0 4px;
  border: 1px solid #ccc;
  border-radius: 1px;
  font: 11px "Liberation Sans", sans-serif;
}

.nav-search::placeholder {
  color: #aaa;
}

.nav-user {
  margin-left: 0;
}

.title-row {
  height: 46px;
  display: flex;
  align-items: center;
  justify-content: space-between;
  padding: 0 24px 0 18px;
  border-bottom: 1px solid #dcdcdc;
}

.title-row h1 {
  margin: 1px 0 0;
  color: #444;
  font-size: 21px;
  font-weight: 400;
}

.timecontrol {
  display: flex;
  align-items: center;
  gap: 3px;
  margin-top: 6px;
  color: #666;
  font-size: 9px;
  font-weight: bold;
}

.timecontrol span {
  margin-right: 3px;
}

.actions-row {
  height: 29px;
  display: flex;
  align-items: center;
  justify-content: flex-end;
  padding-right: 16px;
  background: #f0eeef;
  border-bottom: 1px solid #dcdcdc;
}

.actions-btn {
  width: 58px;
  height: 23px;
  padding: 0;
  background: #fff;
  border: 1px solid #ccc;
  border-radius: 2px;
  color: #333;
  font: 11px "Liberation Sans", sans-serif;
}

.actions-btn .caret {
  display: inline-block;
  vertical-align: middle;
}

.range-row {
  height: 29px;
  display: flex;
  justify-content: flex-end;
  gap: 7px;
  padding: 10px 23px 0 0;
  color: #3a8fc0;
  font-size: 9px;
  letter-spacing: .15px;
}

.range-on {
  color: #666;
  font-weight: bold;
  letter-spacing: 0;
}

.charts {
  display: flex;
  flex-direction: column;
  gap: 15px;
  padding-left: 243px;
}

.card {
  width: 248px;
  height: 135px;
  flex: none;
  background: #fff;
  border: 1px solid #d8d8d8;
}

.card-title {
  height: 16px;
  padding: 1px 0 0 7px;
  color: #333;
  font-size: 9px;
  line-height: 14px;
  font-weight: bold;
}

.card-title span {
  margin-left: 3px;
  color: #888;
}

.card-sub {
  height: 13px;
  padding-left: 7px;
  color: #aaa;
  font-size: 9px;
  line-height: 14px;
}

.plot {
  display: block;
}

.axis {
  fill: #999;
  font-size: 8.500px;
}

.axis-name {
  font-size: 9px;
}

.axis-y {
  stroke: #aaa;
  fill: none;
}

.axis-grid {
  stroke: #888;
  stroke-dasharray: 1 2;
  fill: none;
}

.legend-bar {
  display: flex;
  gap: 7px;
  margin-top: 5px;
  padding-left: 17px;
}

.legend-clip {
  width: 197px;
  height: 23px;
  overflow: hidden;
}

.legend {
  display: grid;
  grid-template-columns: 94px 94px;
  column-gap: 9px;
}

.legend-scrolled {
  margin-top: -8px;
}

.lg {
  height: 11px;
  display: flex;
  align-items: center;
  color: #666;
  font-size: 8.500px;
  white-space: nowrap;
}

.lg span {
  flex: 1;
  min-width: 0;
  overflow: hidden;
}

.lg b {
  color: #555;
  font-size: 9px;
}

.sw {
  width: 6px;
  height: 3px;
  flex: none;
  margin: 2px 2px 0 0;
}

.c-yellow { background: #e0bd56; }
.c-blue { background: #2171b5; }
.c-brown { background: #b5531f; }
.c-pink { background: #fb9a99; }
.c-orange { background: #fda136; }
.c-green { background: #b2df8a; }
.c-teal { background: #66c2a5; }
.c-purple { background: #6a3d9a; }

.legend-arrows {
  width: 15px;
  height: 23px;
  display: flex;
  flex-direction: column;
  align-items: center;
  justify-content: center;
  gap: 5px;
  background: #f0f0f0;
}

.up,
.down {
  width: 0;
  height: 0;
  border-style: solid;
  border-color: transparent;
}

.up {
  border-width: 0 4px 4px;
  border-bottom-color: #999;
}

.down {
  border-width: 4px 4px 0;
  border-top-color: #444;
}
```
